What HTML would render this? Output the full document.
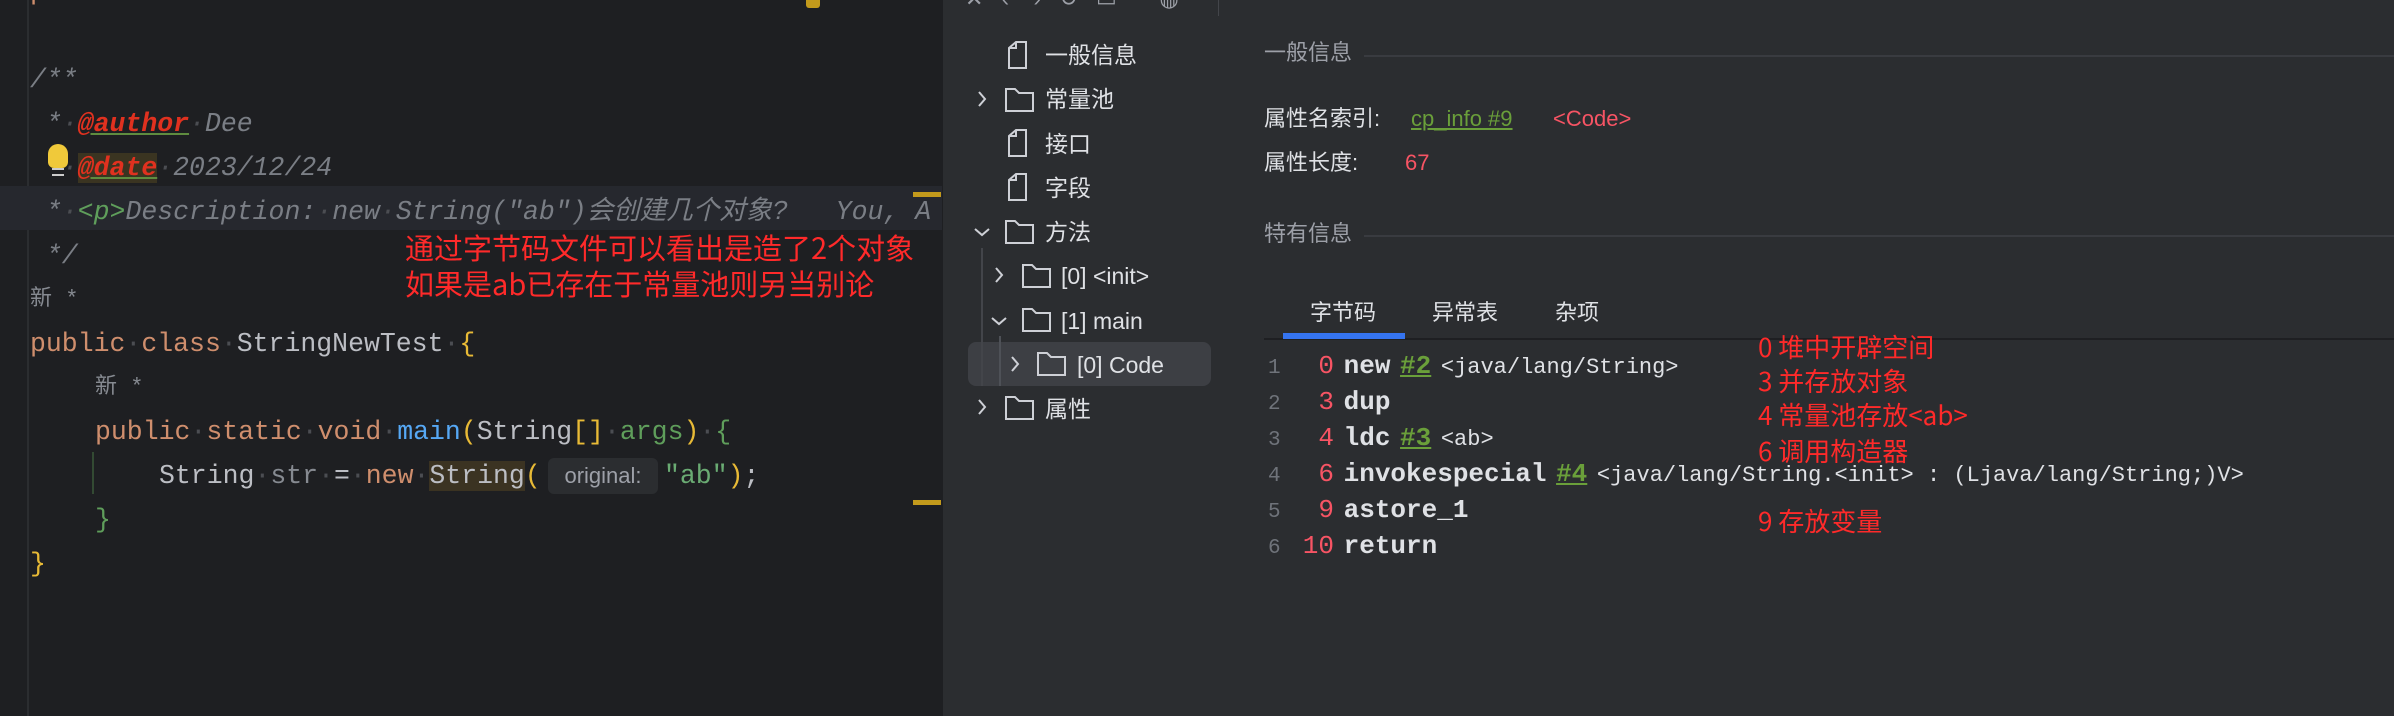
<!DOCTYPE html>
<html><head><meta charset="utf-8"><style>
*{margin:0;padding:0;box-sizing:border-box}
body{width:2394px;height:716px;overflow:hidden;background:#1e1f22;position:relative;font-family:"Liberation Sans","Noto Sans CJK SC",sans-serif}
.a{position:absolute;white-space:pre}
.m{font-family:"Liberation Mono","Noto Sans CJK SC",monospace;font-size:26.5px;line-height:44px;height:44px;color:#bcbec4}
.c{color:#7a7e85;font-style:italic}
.kw{color:#cf8e6d}
.dot{color:#4b4d52}
.red{color:#ff2a2a;font-family:"Noto Sans CJK SC",sans-serif}
.tree{font-size:23px;color:#dfe1e5;line-height:44px;height:44px;font-family:"Liberation Sans","Noto Sans CJK SC",sans-serif}
.g{color:#9da0a8}
</style></head><body>
<!-- editor -->
<div class="a" style="left:27px;top:0;width:2px;height:716px;background:#2b2d30"></div>
<div class="a" style="left:0;top:186px;width:942px;height:44px;background:#26282e"></div>
<div class="a m" style="left:30px;top:-30px;color:#cf8e6d">p      </div>
<div class="a m c" style="left:30px;top:58px">/**</div>
<div class="a m c" style="left:30px;top:102px"> *<span class="dot">·</span><span style="color:#e0311f;text-decoration:underline;text-decoration-color:#5f8c3f;font-weight:bold">@author</span><span class="dot">·</span>Dee</div>
<div class="a m c" style="left:30px;top:146px"> *<span class="dot">·</span><span style="color:#e0311f;background:#3a3421;text-decoration:underline;text-decoration-color:#5f8c3f;font-weight:bold">@date</span><span class="dot">·</span>2023/12/24</div>
<div class="a" style="left:48px;top:144px;width:20px;height:24px;border-radius:10px 10px 6px 6px;background:#f0c93a"></div>
<div class="a" style="left:52px;top:168px;width:12px;height:8px;border-top:2px solid #ccc;border-bottom:2px solid #ccc"></div>
<div class="a m c" style="left:30px;top:190px"> *<span class="dot">·</span><span style="color:#5f9e5b">&lt;p&gt;</span>Description:<span class="dot">·</span>new<span class="dot">·</span>String("ab")会创建几个对象?   You, A</div>
<div class="a m c" style="left:30px;top:234px"> */</div>
<div class="a m" style="left:30px;top:278px;color:#868a91;font-size:22px">新 *</div>
<div class="a m" style="left:30px;top:322px"><span class="kw">public</span><span class="dot">·</span><span class="kw">class</span><span class="dot">·</span>StringNewTest<span class="dot">·</span><span style="color:#e8ba36">{</span></div>
<div class="a m" style="left:95px;top:366px;color:#868a91;font-size:22px">新 *</div>
<div class="a m" style="left:95px;top:410px"><span class="kw">public</span><span class="dot">·</span><span class="kw">static</span><span class="dot">·</span><span class="kw">void</span><span class="dot">·</span><span style="color:#56a8f5">main</span><span style="color:#e8ba36">(</span>String<span style="color:#e8ba36">[]</span><span class="dot">·</span><span style="color:#5f9e5b">args</span><span style="color:#e8ba36">)</span><span class="dot">·</span><span style="color:#5f9e5b">{</span></div>
<div class="a" style="left:92px;top:452px;width:2px;height:42px;background:#334a33"></div>
<div class="a m" style="left:159px;top:454px">String<span class="dot">·</span><span style="color:#868a91">str</span><span class="dot">·</span>=<span class="dot">·</span><span class="kw">new</span><span class="dot">·</span><span style="background:#3b3322">String</span><span style="color:#e8ba36">(</span></div>
<div class="a" style="left:548px;top:458px;width:110px;height:36px;background:#2b2d30;border-radius:6px;color:#9da0a8;font-size:22px;line-height:36px;text-align:center">original:</div>
<div class="a m" style="left:664px;top:454px"><span style="color:#6aab73">"ab"</span><span style="color:#e8ba36">)</span>;</div>
<div class="a m" style="left:95px;top:498px;color:#5f9e5b">}</div>
<div class="a m" style="left:30px;top:542px;color:#e8ba36">}</div>
<div class="a" style="left:913px;top:192px;width:28px;height:5px;background:#c39a1c"></div>
<div class="a" style="left:913px;top:500px;width:28px;height:5px;background:#c39a1c"></div>
<div class="a" style="left:806px;top:0;width:14px;height:8px;background:#c39a1c;border-radius:0 0 3px 3px"></div>
<div class="a red" style="left:405px;top:228px;font-size:29px;line-height:38px">通过字节码文件可以看出是造了2个对象</div>
<div class="a red" style="left:405px;top:264px;font-size:29px;line-height:38px">如果是ab已存在于常量池则另当别论</div>
<!-- right panel -->
<div class="a" style="left:943px;top:0;width:1451px;height:716px;background:#2b2d30"></div>
<div class="a" style="left:1218px;top:0;width:1px;height:16px;background:#43454a"></div>
<div class="a g" style="left:965px;top:-14px;font-size:22px">✕   ‹    ›   ↻   ▭       ◍</div>
<!-- tree -->
<div class="a" style="left:968px;top:342px;width:243px;height:44px;background:#3d3f44;border-radius:8px"></div>
<div class="a" style="left:981px;top:248px;width:2px;height:138px;background:#43454a"></div>
<div class="a" style="left:999px;top:336px;width:2px;height:50px;background:#4e5157"></div>
<svg class="a" style="left:0;top:0" width="2394" height="716" fill="none" stroke="#ced0d6" stroke-width="2">
<path d="M1016 42h10v26h-17v-20z M1016 42v6h-7"/>
<path d="M1016 130h10v26h-17v-20z M1016 130v6h-7"/>
<path d="M1016 174h10v26h-17v-20z M1016 174v6h-7"/>
<path d="M1006 89h9l4 4h14v18h-27z"/><path d="M1006 221h9l4 4h14v18h-27z"/><path d="M1006 397h9l4 4h14v18h-27z"/>
<path d="M1023 265h9l4 4h14v18h-27z"/><path d="M1023 309h9l4 4h14v18h-27z"/><path d="M1038 353h9l4 4h14v18h-27z"/>
<path d="M979 92l6 7l-6 7M979 400l6 7l-6 7M996 268l6 7l-6 7M1012 357l6 7l-6 7M975 229l7 6l7-6M992 318l7 6l7-6"/>
</svg>
<div class="a tree" style="left:1045px;top:33px">一般信息</div>
<div class="a tree" style="left:1045px;top:77px">常量池</div>
<div class="a tree" style="left:1045px;top:122px">接口</div>
<div class="a tree" style="left:1045px;top:166px">字段</div>
<div class="a tree" style="left:1045px;top:210px">方法</div>
<div class="a tree" style="left:1061px;top:254px">[0] &lt;init&gt;</div>
<div class="a tree" style="left:1061px;top:299px">[1] main</div>
<div class="a tree" style="left:1077px;top:343px">[0] Code</div>
<div class="a tree" style="left:1045px;top:387px">属性</div>
<!-- info -->
<div class="a g" style="left:1264px;top:38px;font-size:22px;line-height:30px">一般信息</div>
<div class="a" style="left:1364px;top:55px;width:1030px;height:2px;background:#393b40"></div>
<div class="a" style="left:1264px;top:104px;font-size:22px;line-height:30px;color:#dfe1e5">属性名索引:</div>
<div class="a" style="left:1411px;top:104px;font-size:22px;line-height:30px;color:#6a9f3a;text-decoration:underline">cp_info #9</div>
<div class="a" style="left:1553px;top:104px;font-size:22px;line-height:30px;color:#f75464">&lt;Code&gt;</div>
<div class="a" style="left:1264px;top:148px;font-size:22px;line-height:30px;color:#dfe1e5">属性长度:</div>
<div class="a" style="left:1405px;top:148px;font-size:22px;line-height:30px;color:#f75464">67</div>
<div class="a g" style="left:1264px;top:219px;font-size:22px;line-height:30px">特有信息</div>
<div class="a" style="left:1364px;top:235px;width:1030px;height:2px;background:#393b40"></div>
<div class="a" style="left:1310px;top:298px;font-size:22px;line-height:30px;color:#dfe1e5">字节码</div>
<div class="a" style="left:1432px;top:298px;font-size:22px;line-height:30px;color:#dfe1e5">异常表</div>
<div class="a" style="left:1555px;top:298px;font-size:22px;line-height:30px;color:#dfe1e5">杂项</div>
<div class="a" style="left:1264px;top:338px;width:1130px;height:2px;background:#1e1f22"></div>
<div class="a" style="left:1283px;top:333px;width:122px;height:6px;background:#3574f0"></div>
<!-- bytecode -->
<div style="position:absolute;left:1264px;top:348px;font-family:'Liberation Mono',monospace">
<div style="height:36px;line-height:36px;white-space:pre"><span style="display:inline-block;width:30px;color:#6f737a;font-size:21px;padding-left:4px">1</span><span style="display:inline-block;width:40px;text-align:right;color:#f75464;font-size:26px">0</span> <b style="color:#dfe1e5;font-size:26px">new</b> <span style="color:#6a9f3a;font-size:26px;text-decoration:underline;font-weight:bold">#2</span> <span style="color:#dfe1e5;font-size:22px">&lt;java/lang/String&gt;</span></div>
<div style="height:36px;line-height:36px;white-space:pre"><span style="display:inline-block;width:30px;color:#6f737a;font-size:21px;padding-left:4px">2</span><span style="display:inline-block;width:40px;text-align:right;color:#f75464;font-size:26px">3</span> <b style="color:#dfe1e5;font-size:26px">dup</b></div>
<div style="height:36px;line-height:36px;white-space:pre"><span style="display:inline-block;width:30px;color:#6f737a;font-size:21px;padding-left:4px">3</span><span style="display:inline-block;width:40px;text-align:right;color:#f75464;font-size:26px">4</span> <b style="color:#dfe1e5;font-size:26px">ldc</b> <span style="color:#6a9f3a;font-size:26px;text-decoration:underline;font-weight:bold">#3</span> <span style="color:#dfe1e5;font-size:22px">&lt;ab&gt;</span></div>
<div style="height:36px;line-height:36px;white-space:pre"><span style="display:inline-block;width:30px;color:#6f737a;font-size:21px;padding-left:4px">4</span><span style="display:inline-block;width:40px;text-align:right;color:#f75464;font-size:26px">6</span> <b style="color:#dfe1e5;font-size:26px">invokespecial</b> <span style="color:#6a9f3a;font-size:26px;text-decoration:underline;font-weight:bold">#4</span> <span style="color:#dfe1e5;font-size:22px">&lt;java/lang/String.&lt;init&gt; : (Ljava/lang/String;)V&gt;</span></div>
<div style="height:36px;line-height:36px;white-space:pre"><span style="display:inline-block;width:30px;color:#6f737a;font-size:21px;padding-left:4px">5</span><span style="display:inline-block;width:40px;text-align:right;color:#f75464;font-size:26px">9</span> <b style="color:#dfe1e5;font-size:26px">astore_1</b></div>
<div style="height:36px;line-height:36px;white-space:pre"><span style="display:inline-block;width:30px;color:#6f737a;font-size:21px;padding-left:4px">6</span><span style="display:inline-block;width:40px;text-align:right;color:#f75464;font-size:26px">10</span> <b style="color:#dfe1e5;font-size:26px">return</b></div>
</div>
<div class="a red" style="left:1758px;top:330px;font-size:26px;line-height:34px">0 堆中开辟空间</div>
<div class="a red" style="left:1758px;top:364px;font-size:26px;line-height:34px">3 并存放对象</div>
<div class="a red" style="left:1758px;top:398px;font-size:26px;line-height:34px">4 常量池存放&lt;ab&gt;</div>
<div class="a red" style="left:1758px;top:434px;font-size:26px;line-height:34px">6 调用构造器</div>
<div class="a red" style="left:1758px;top:504px;font-size:26px;line-height:34px">9 存放变量</div>
</body></html>
